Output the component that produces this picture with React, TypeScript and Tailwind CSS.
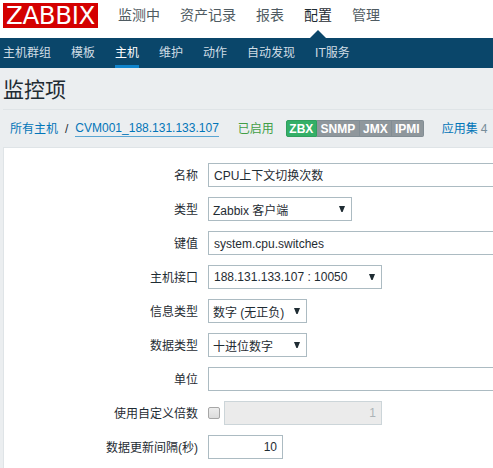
import React from "react";

const MENU = [
  { label: "监测中" },
  { label: "资产记录" },
  { label: "报表" },
  { label: "配置", active: true },
  { label: "管理" },
];

const SUBMENU = ["主机群组", "模板", "主机", "维护", "动作", "自动发现", "IT服务"];

const BADGES = [
  { label: "ZBX", cls: "w-[31px] bg-[#34af67] border-[#2f9f5e] rounded-l-[2px]" },
  { label: "SNMP", cls: "w-[43px] bg-[#8f979c] border-[#828d94] border-l-0" },
  { label: "JMX", cls: "w-[32px] bg-[#8f979c] border-[#828d94] border-l-0" },
  { label: "IPMI", cls: "w-[32px] bg-[#8f979c] border-[#828d94] border-l-0 rounded-r-[2px]" },
];

function Row({ label, children }: { label: string; children: React.ReactNode }) {
  return (
    <div className="flex h-6 items-center">
      <label className="w-[194px] shrink-0 whitespace-nowrap pt-px text-right">{label}</label>
      <div className="ml-[10px] flex min-w-0 flex-1 items-center">{children}</div>
    </div>
  );
}

function Field({ text }: { text: string }) {
  return (
    <div className="flex h-6 w-[320px] shrink-0 items-center border border-[#acbbc2] bg-white pt-px pl-[5px] whitespace-nowrap">
      {text}
    </div>
  );
}

function Select({ text, width, inset = "pl-1 pt-[3px]" }: { text: string; width: string; inset?: string }) {
  return (
    <div className={`flex h-6 shrink-0 items-center justify-between border border-[#acbbc2] bg-white pr-[6px] whitespace-nowrap ${width}`}>
      <span className={inset}>{text}</span>
      <svg width="6" height="6" viewBox="0 0 6 6" className="mb-px" fill="#1f2c33">
        <path d="M0 0h6L3.6 6H2.4z" />
      </svg>
    </div>
  );
}

export default function App() {
  return (
    <div className="flex h-[468px] w-[493px] flex-col overflow-hidden bg-[#ebeef0] font-['Liberation_Sans','Noto_Sans_CJK_SC',sans-serif] text-[12px] leading-[18px] text-[#1f2c33]">
      <header className="flex h-[38px] shrink-0 bg-white pl-[3px]">
        <div className="mt-[3px] flex h-[25px] w-[95px] items-center justify-center bg-[#d40000] pt-px font-['DejaVu_Sans'] text-[24.5px] leading-[24px] tracking-[-0.4px] text-white">
          ZABBIX
        </div>
        <nav className="ml-5 flex gap-5 text-[14px] leading-[30px] text-[#4f5b62]">
          {MENU.map((m) => (
            <div key={m.label} className={m.active ? "relative text-[#1f2c33]" : ""}>
              {m.label}
              {m.active && (
                <svg width="16" height="8" viewBox="0 0 16 8" className="absolute top-[30px] left-[6px]" fill="#0a466a">
                  <path d="M0 8 8 0l8 8z" />
                </svg>
              )}
            </div>
          ))}
        </nav>
      </header>

      <nav className="flex h-[30px] shrink-0 gap-5 bg-[#0a466a] pl-[3px] leading-[31px] whitespace-nowrap text-[#d0dde5]">
        {SUBMENU.map((s) => (
          <div key={s} className={s === "主机" ? "h-[30px] border-b-3 border-[#0f84cc] text-white" : "h-[30px]"}>
            {s}
          </div>
        ))}
      </nav>

      <div className="ml-[3px] flex h-[42px] shrink-0 items-center border-b border-[#dfe4e7] pt-[3px]">
        <h1 className="text-[21px] leading-[30px]">监控项</h1>
      </div>

      <div className="flex h-[37px] shrink-0 items-center pl-[10px] whitespace-nowrap">
        <a className="text-[#0275b8]">所有主机</a>
        <span className="ml-[7px]">/</span>
        <a className="ml-[7px] h-[17px] border-b border-[#5aa5d2] leading-[17px] text-[#0275b8]">CVM001_188.131.133.107</a>
        <span className="ml-[19px] text-[#429e47]">已启用</span>
        <div className="ml-3 flex text-[12px] font-bold text-white">
          {BADGES.map((b) => (
            <span key={b.label} className={`flex h-[17px] items-center justify-center border pt-px leading-[15px] ${b.cls}`}>
              {b.label}
            </span>
          ))}
        </div>
        <a className="ml-[18px] text-[#0275b8]">应用集</a>
        <span className="ml-[3px] text-[#768d99]">4</span>
      </div>

      <main className="ml-[3px] flex flex-1 flex-col gap-[10px] border-t border-l border-[#dfe4e7] bg-white pt-[15px]">
        <Row label="名称"><Field text="CPU上下文切换次数" /></Row>
        <Row label="类型"><Select text="Zabbix 客户端" width="w-[144px]" /></Row>
        <Row label="键值"><Field text="system.cpu.switches" /></Row>
        <Row label="主机接口"><Select text="188.131.133.107 : 10050" width="w-[174px]" inset="pl-[5px]" /></Row>
        <Row label="信息类型"><Select text="数字 (无正负)" width="w-[99px]" /></Row>
        <Row label="数据类型"><Select text="十进位数字" width="w-[99px]" /></Row>
        <Row label="单位"><Field text="" /></Row>
        <Row label="使用自定义倍数">
          <span className="h-3 w-3 rounded-[2px] border border-[#a6a6a6] bg-linear-to-b from-[#ededed] to-[#dcdcdc]" />
          <div className="ml-1 flex h-6 w-[158px] items-center justify-end border border-[#ccd5d9] bg-[#ebebeb] pr-[5px] text-[#acb3b7]">1</div>
        </Row>
        <Row label="数据更新间隔(秒)">
          <div className="flex h-6 w-[75px] items-center justify-end border border-[#acbbc2] bg-white pr-[5px]">10</div>
        </Row>
      </main>
    </div>
  );
}
